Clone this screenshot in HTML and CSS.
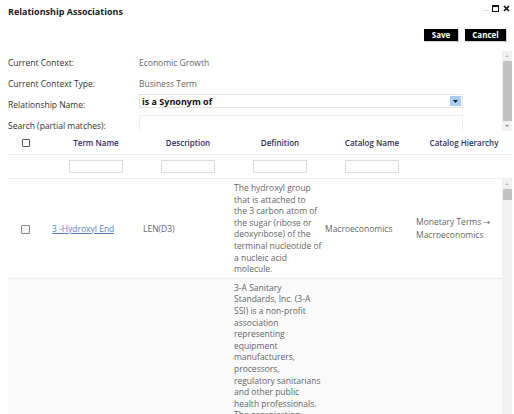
FILE: index.html
```html
<!DOCTYPE html>
<html lang="en">
<head>
    <meta charset="UTF-8">
    <title>Relationship Associations</title>
    <link rel="stylesheet" href="styles.css">
</head>
<body>
    <div class="dialog">
        <div class="titlebar">
            <span class="title">Relationship Associations</span>
            <span class="win-ctrls">
                <span class="win-min"></span>
                <span class="win-max"></span>
                <svg class="win-close" width="7" height="7" viewBox="0 0 7 7"><path d="M1 1L6 6M6 1L1 6" stroke="#111" stroke-width="1.7"/></svg>
            </span>
        </div>

        <div class="actions">
            <button class="btn">Save</button>
            <button class="btn">Cancel</button>
        </div>

        <div class="form-pane">
            <div class="form-scroll">
                <div class="form-row">
                    <div class="form-label">Current Context:</div>
                    <div class="form-value">Economic Growth</div>
                </div>
                <div class="form-row">
                    <div class="form-label">Current Context Type:</div>
                    <div class="form-value">Business Term</div>
                </div>
                <div class="form-row">
                    <div class="form-label">Relationship Name:</div>
                    <div class="select">
                        <span class="select-text">is a Synonym of</span>
                        <span class="select-btn"><svg width="5" height="3" viewBox="0 0 5 3"><path d="M0 0H5L2.5 3Z" fill="#222"/></svg></span>
                    </div>
                </div>
                <div class="form-row">
                    <div class="form-label">Search (partial matches):</div>
                    <div class="search-box"></div>
                </div>
            </div>
            <div class="vscroll">
                <span class="arrow up"></span>
                <span class="thumb form-thumb"></span>
                <span class="arrow down"></span>
            </div>
        </div>

        <div class="grid-head">
            <div class="head-row">
                <div class="hcell cb-col"><span class="checkbox small"></span></div>
                <div class="hcell">Term Name</div>
                <div class="hcell">Description</div>
                <div class="hcell">Definition</div>
                <div class="hcell">Catalog Name</div>
                <div class="hcell">Catalog Hierarchy</div>
            </div>
            <div class="filter-row">
                <div class="hcell cb-col"></div>
                <div class="hcell"><span class="filter-input"></span></div>
                <div class="hcell"><span class="filter-input"></span></div>
                <div class="hcell"><span class="filter-input"></span></div>
                <div class="hcell"><span class="filter-input"></span></div>
                <div class="hcell"></div>
            </div>
        </div>

        <div class="grid-body">
            <div class="body-scroll">
                <div class="row">
                    <div class="cell cb-col"><span class="checkbox"></span></div>
                    <div class="cell"><a class="term-link" href="#">3 -Hydroxyl End</a></div>
                    <div class="cell">LEN(D3)</div>
                    <div class="cell def">The hydroxyl group<br>that is attached to<br>the 3 carbon atom of<br>the sugar (ribose or<br>deoxyribose) of the<br>terminal nucleotide of<br>a nucleic acid<br>molecule.</div>
                    <div class="cell">Macroeconomics</div>
                    <div class="cell">Monetary Terms <span class="path-arrow">&rarr;</span><br>Macroeconomics</div>
                </div>
                <div class="row alt">
                    <div class="cell cb-col"></div>
                    <div class="cell"></div>
                    <div class="cell"></div>
                    <div class="cell def">3-A Sanitary<br>Standards, Inc. (3-A<br>SSI) is a non-profit<br>association<br>representing<br>equipment<br>manufacturers,<br>processors,<br>regulatory sanitarians<br>and other public<br>health professionals.<br>The organization</div>
                    <div class="cell"></div>
                    <div class="cell"></div>
                </div>
            </div>
            <div class="vscroll body-bar">
                <span class="arrow up"></span>
                <span class="thumb body-thumb"></span>
            </div>
        </div>
    </div>
</body>
</html>
```

FILE: styles.css
```css
body {
    margin: 0;
    background: #ffffff;
    font-family: "Open Sans", Arial, sans-serif;
    font-size: 8.5px;
    color: #555555;
}

.dialog {
    width: 514px;
    height: 414px;
    overflow: hidden;
    padding-left: 8px;
    box-sizing: border-box;
    display: flex;
    flex-direction: column;
}

.titlebar {
    height: 22px;
    display: flex;
    align-items: center;
    justify-content: space-between;
    padding-right: 4px;
}

.title {
    font-weight: bold;
    font-size: 9px;
    color: #222222;
}

.win-ctrls {
    display: flex;
    align-items: center;
    gap: 4px;
    margin-top: -6px;
}

.win-min {
    width: 5px;
    height: 1px;
    background: #dddddd;
    margin-top: 5px;
}

.win-max {
    width: 5px;
    height: 4px;
    border: 1px solid #111111;
    border-top-width: 2px;
}

.actions {
    display: flex;
    justify-content: flex-end;
    gap: 7px;
    padding: 7px 8px 0 0;
    height: 19px;
}

.btn {
    background: #000000;
    color: #ffffff;
    border: none;
    font-family: "Open Sans", Arial, sans-serif;
    font-weight: bold;
    font-size: 8px;
    height: 12px;
    padding: 0;
    line-height: 12px;
    box-shadow: 1px 1px 0 #cfcfcf;
}

.btn:first-child {
    width: 34px;
}

.btn:last-child {
    width: 41px;
}

.form-pane {
    display: flex;
    height: 80px;
    margin-top: 3px;
}

.form-scroll {
    flex: 1;
    overflow: hidden;
    padding-top: 1px;
}

.form-row {
    display: flex;
    align-items: flex-start;
    height: 21px;
}

.form-label {
    width: 131px;
    padding-top: 5px;
    line-height: 11px;
    color: #333333;
}

.form-value {
    padding-top: 5px;
    line-height: 11px;
    color: #666666;
}

.select {
    width: 324px;
    height: 14px;
    box-sizing: border-box;
    border: 1px solid #e3e3e3;
    display: flex;
    align-items: center;
    justify-content: space-between;
    padding: 0 1px 0 2px;
}

.select-text {
    font-weight: bold;
    font-size: 9px;
    color: #111111;
}

.select-btn {
    width: 11px;
    height: 10px;
    background: #a9cdf5;
    display: flex;
    align-items: center;
    justify-content: center;
}

.search-box {
    width: 324px;
    height: 18px;
    box-sizing: border-box;
    border: 1px solid #eeeeee;
    border-bottom: none;
}

.vscroll {
    width: 10px;
    margin-right: 2px;
    background: #f1f1f1;
    display: flex;
    flex-direction: column;
    align-items: center;
}

.arrow {
    width: 0;
    height: 0;
    border-left: 2px solid transparent;
    border-right: 2px solid transparent;
    margin: 4px 0;
}

.arrow.up {
    border-bottom: 2px solid #bbbbbb;
}

.arrow.down {
    border-top: 2px solid #888888;
}

.thumb {
    width: 9px;
    background: #c1c1c1;
}

.form-thumb {
    flex: 1;
}

.grid-head {
    padding-right: 2px;
    font-size: 8px;
}

.head-row,
.filter-row,
.row {
    display: grid;
    grid-template-columns: 42px repeat(5, 92px);
}

.head-row {
    height: 23px;
    align-items: center;
    border-bottom: 1px solid #eeeeee;
    font-weight: 600;
    color: #2d3064;
}

.filter-row {
    height: 23px;
    align-items: center;
    border-bottom: 1px solid #eeeeee;
}

.hcell {
    text-align: center;
}

.cb-col {
    text-align: left;
    padding-left: 14px;
}

.head-row .cb-col {
    margin-top: -2px;
}

.filter-input {
    display: inline-block;
    width: 52px;
    height: 11px;
    border: 1px solid #dddddd;
    vertical-align: middle;
}

.checkbox {
    display: inline-block;
    width: 7px;
    height: 7px;
    border: 1px solid #8a8a8a;
    border-radius: 1px;
    background: #f4f4f4;
    vertical-align: middle;
}

.checkbox.small {
    width: 6px;
    height: 6px;
    border-color: #555555;
    background: #ffffff;
}

.grid-body {
    flex: 1;
    display: flex;
    min-height: 0;
}

.body-scroll {
    flex: 1;
    overflow: hidden;
}

.row {
    grid-template-columns: 38px repeat(5, 91px);
    align-items: center;
    border-bottom: 1px solid #eeeeee;
    line-height: 11.6px;
    color: #666666;
}

.row.alt {
    background: #fafafa;
    align-items: start;
}

.cell {
    padding: 3px 0 3px 6px;
    white-space: nowrap;
}

.row .cb-col {
    padding-left: 13px;
}

.term-link {
    color: #5a82c8;
    text-decoration: underline;
}

.path-arrow {
    font-family: "DejaVu Sans", sans-serif;
    font-size: 8px;
}

.body-bar {
    align-self: stretch;
}

.body-thumb {
    height: 11px;
}
```
